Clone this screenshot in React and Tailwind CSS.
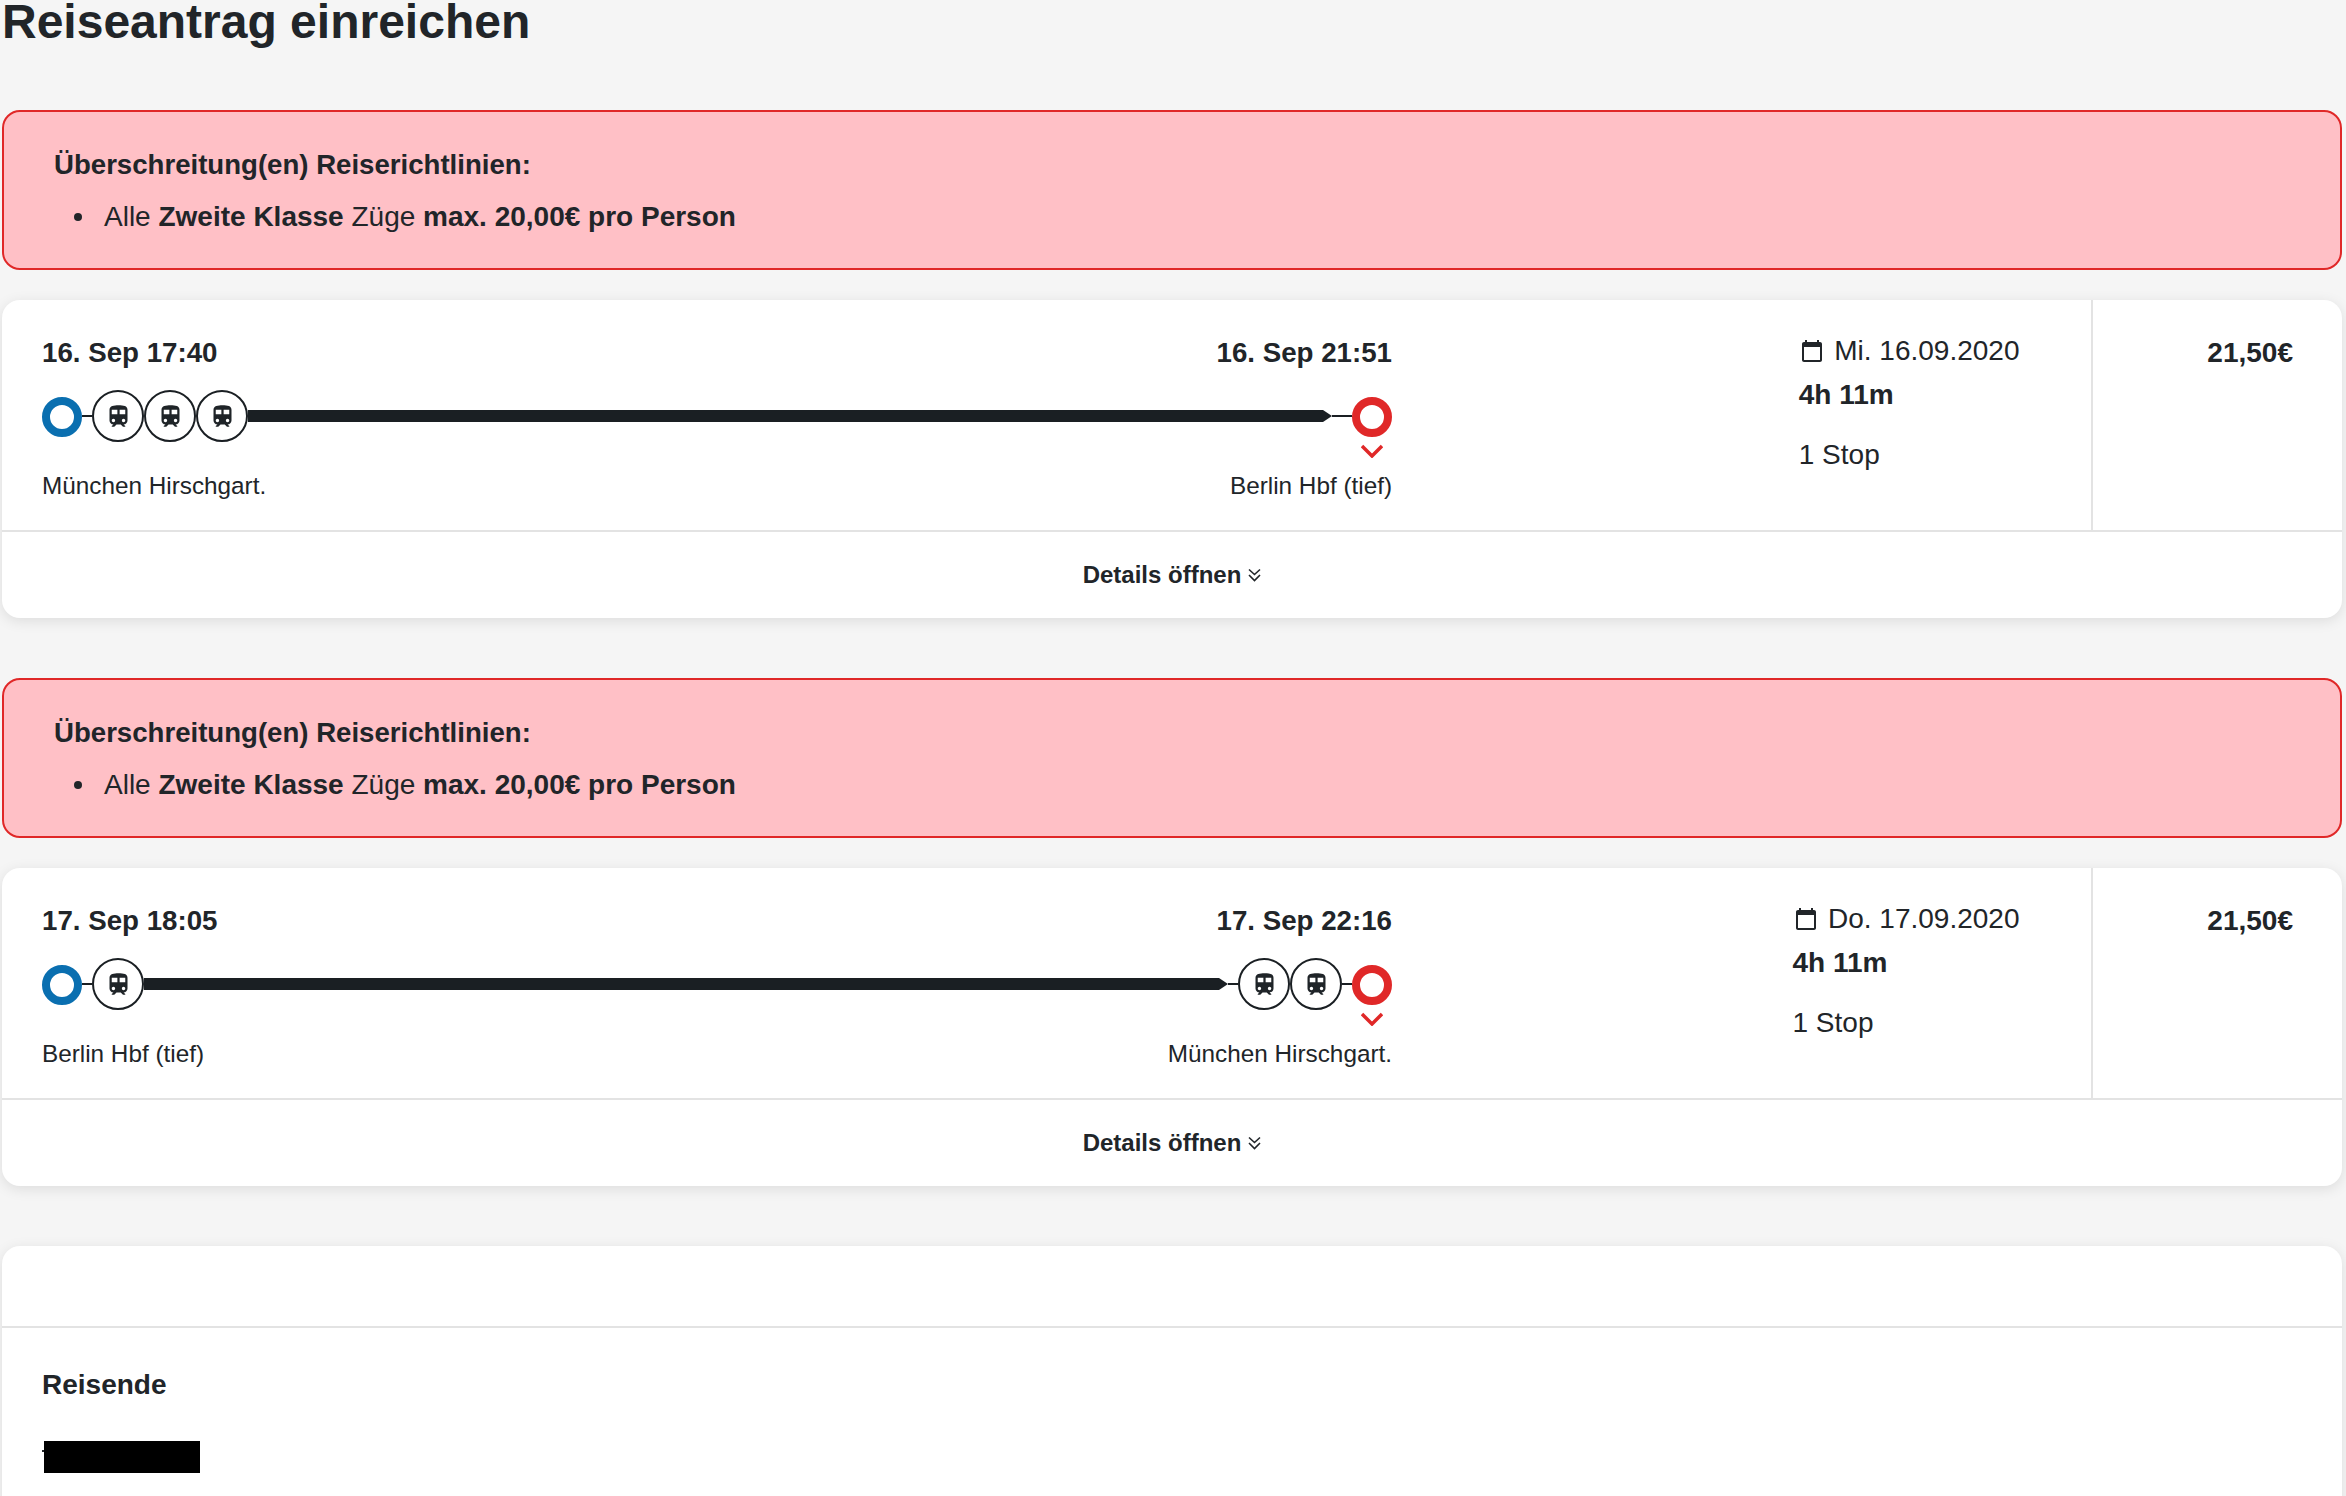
const font = { fontFamily: '"Liberation Sans", Arial, sans-serif' };

function TrainIcon() {
  return (
    <span className="flex h-[52px] w-[52px] shrink-0 items-center justify-center rounded-full border-2 border-[#1a1f23] bg-white">
      <svg viewBox="0 0 24 24" className="h-[27px] w-[27px] fill-[#1f2428]">
        <path d="M12 2c-4 0-8 .5-8 4v9.5C4 17.43 5.57 19 7.5 19L6 20.5v.5h2.23l2-2H14l2 2h2v-.5L16.5 19c1.93 0 3.5-1.57 3.5-3.5V6c0-3.5-3.58-4-8-4zM7.5 17c-.83 0-1.5-.67-1.5-1.5S6.67 14 7.5 14s1.5.67 1.5 1.5S8.33 17 7.5 17zm3.5-7H6V6h5v4zm2 0V6h5v4h-5zm3.5 7c-.83 0-1.5-.67-1.5-1.5s.67-1.5 1.5-1.5 1.5.67 1.5 1.5-.67 1.5-1.5 1.5z" />
      </svg>
    </span>
  );
}

function CalendarIcon() {
  return (
    <svg viewBox="0 0 24 24" className="h-6 w-6 shrink-0 fill-[#212529]">
      <path d="M20 3h-1V1h-2v2H7V1H5v2H4c-1.1 0-2 .9-2 2v16c0 1.1.9 2 2 2h16c1.1 0 2-.9 2-2V5c0-1.1-.9-2-2-2zm0 18H4V8h16v13z" />
    </svg>
  );
}

function Policy() {
  return (
    <div className="h-40 rounded-[18px] border-2 border-[#e02828] bg-[#ffc0c6] pl-[50px] pt-[35px] text-[28px] leading-9 text-[#212529]">
      <p className="mb-4 text-[27.6px] font-bold">Überschreitung(en) Reiserichtlinien:</p>
      <ul className="pl-5">
        <li className="flex items-center gap-[22px]">
          <span className="h-2 w-2 rounded-full bg-[#212529]" />
          <span>
            Alle <b>Zweite Klasse</b> Züge <b>max. 20,00€ pro Person</b>
          </span>
        </li>
      </ul>
    </div>
  );
}

function Timeline({ before, after }) {
  return (
    <div className="relative mt-[19px] flex h-[52px] items-center">
      <span className="mt-[2px] h-10 w-10 shrink-0 rounded-full border-[8px] border-[#0a6fb0]" />
      <span className="h-[2px] w-[10px] shrink-0 bg-[#1a1f23]" />
      {Array.from({ length: before }).map((_, i) => (
        <TrainIcon key={i} />
      ))}
      <span className="h-3 flex-1 bg-[#1a1f23]" />
      <span className="h-0 w-0 shrink-0 border-y-[6px] border-l-[9px] border-y-transparent border-l-[#1a1f23]" />
      {after > 0 && <span className="h-[2px] w-[10px] shrink-0 bg-[#1a1f23]" />}
      {Array.from({ length: after }).map((_, i) => (
        <TrainIcon key={i} />
      ))}
      <span className={`h-[2px] shrink-0 bg-[#1a1f23] ${after > 0 ? "w-[10px]" : "w-5"}`} />
      <span className="mt-[2px] h-10 w-10 shrink-0 rounded-full border-[8px] border-[#e02828]" />
      <svg viewBox="0 0 22 14" className="absolute right-[9px] top-[54px] h-[14px] w-[22px] fill-none stroke-[#e02828] stroke-[3.5]">
        <path d="M1 2l10 10L21 2" />
      </svg>
    </div>
  );
}

function Connection({ from, to, start, end, date, before, after }) {
  return (
    <div className="rounded-[18px] bg-white text-[#212529] shadow-[0_3px_14px_rgba(0,0,0,0.10)]">
      <div className="flex h-[232px] border-b-2 border-[#e3e3e3]">
        <div className="w-[1390px] shrink-0 pl-10">
          <div className="flex justify-between pt-[35px] text-[27.7px] font-bold leading-9">
            <span>{start}</span>
            <span>{end}</span>
          </div>
          <Timeline before={before} after={after} />
          <div className="mt-[29px] flex justify-between text-[24.3px] leading-[30px]">
            <span>{from}</span>
            <span>{to}</span>
          </div>
        </div>
        <div className="flex flex-1 justify-end pr-[71.5px] pt-[33px] text-[28px] leading-9">
          <div>
            <div className="flex items-center gap-[10.5px] pl-px">
              <CalendarIcon />
              <span>{date}</span>
            </div>
            <div className="mt-2 font-bold">4h 11m</div>
            <div className="mt-6">1 Stop</div>
          </div>
        </div>
        <div className="w-[251px] border-l-2 border-[#e3e3e3] pr-[49px] pt-[35px] text-right text-[28px] font-bold leading-9">
          21,50€
        </div>
      </div>
      <div className="flex h-[86px] items-center justify-center gap-[7px] text-[24px] font-bold leading-[30px]">
        <span>Details öffnen</span>
        <svg viewBox="0 0 13 14" className="h-[14px] w-[13px] fill-none stroke-[#212529] stroke-[1.6]">
          <path d="M1 1.5l5.5 5 5.5-5M1 7l5.5 5.5L12 7" />
        </svg>
      </div>
    </div>
  );
}

export default function App() {
  return (
    <div style={font} className="h-[1496px] overflow-hidden bg-[#f5f5f5] pl-[2px] pr-1">
      <h1 className="text-5xl font-bold leading-[43px] text-[#212529]">Reiseantrag einreichen</h1>
      <div className="mt-[67px]">
        <Policy />
      </div>
      <div className="mt-[30px]">
        <Connection
          start="16. Sep 17:40"
          end="16. Sep 21:51"
          from="München Hirschgart."
          to="Berlin Hbf (tief)"
          date="Mi. 16.09.2020"
          before={3}
          after={0}
        />
      </div>
      <div className="mt-[60px]">
        <Policy />
      </div>
      <div className="mt-[30px]">
        <Connection
          start="17. Sep 18:05"
          end="17. Sep 22:16"
          from="Berlin Hbf (tief)"
          to="München Hirschgart."
          date="Do. 17.09.2020"
          before={1}
          after={2}
        />
      </div>
      <div className="mt-[60px] h-[400px] rounded-t-[18px] bg-white text-[#212529] shadow-[0_3px_14px_rgba(0,0,0,0.10)]">
        <div className="h-[82px] border-b-2 border-[#e3e3e3]" />
        <div className="pl-10 pt-[39px]">
          <h2 className="text-[28px] font-bold leading-9">Reisende</h2>
          <div className="mt-[38px] flex items-start">
            <span className="mt-[9px] h-[2px] w-[3px] bg-[#212529]" />
            <span className="-ml-px h-8 w-[156px] bg-black" />
          </div>
        </div>
      </div>
    </div>
  );
}
